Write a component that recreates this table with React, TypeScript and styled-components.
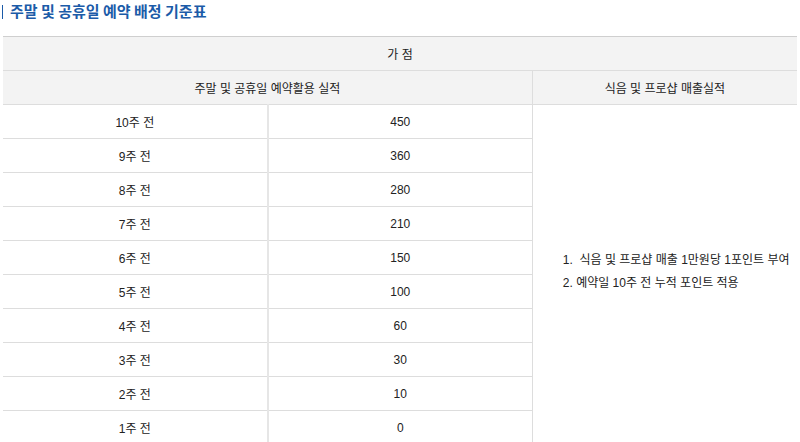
import React from 'react'
import styled, { createGlobalStyle } from 'styled-components'

const GlobalStyle = createGlobalStyle`
  body {
    margin: 0;
    background: #fff;
    font-family: 'Liberation Sans', 'Noto Sans CJK KR', sans-serif;
  }
`

const Wrap = styled.div`
  padding: 0 3px;
`

const Title = styled.h2`
  margin: 0;
  height: 36px;
  display: flex;
  align-items: flex-start;
  padding-top: 1px;
  box-sizing: border-box;
  font-family: 'Noto Sans CJK KR', sans-serif;
  font-size: 15px;
  font-weight: 700;
  color: #1b5ba8;
  line-height: 20px;
  &::before {
    content: '';
    width: 1px;
    height: 14px;
    margin: 4px 7px 0 -1px;
    background: #1b5ba8;
  }
`

const Table = styled.table`
  width: 100%;
  border-collapse: collapse;
  table-layout: fixed;
  border-top: 1px solid #cfcfcf;
  font-size: 12px;
  color: #222;
`

const Th = styled.th`
  height: 33px;
  padding: 0;
  background: #f3f3f3;
  font-weight: 400;
  border-bottom: 1px solid #ddd;
  & + & {
    border-left: 1px solid #ddd;
  }
`

const Td = styled.td`
  height: 33px;
  padding: 0;
  text-align: center;
  border-bottom: 1px solid #ddd;
  & + & {
    border-left: 2px solid #e6e6e6;
  }
`

const NoteCell = styled.td`
  padding: 0 0 6px 30px;
  vertical-align: middle;
  border-left: 1px solid #ddd;
`

const Notes = styled.ol`
  margin: 0;
  padding: 0;
  list-style: none;
  li {
    line-height: 23px;
  }
`

const rows: [string, string][] = [
  ['10주 전', '450'],
  ['9주 전', '360'],
  ['8주 전', '280'],
  ['7주 전', '210'],
  ['6주 전', '150'],
  ['5주 전', '100'],
  ['4주 전', '60'],
  ['3주 전', '30'],
  ['2주 전', '10'],
  ['1주 전', '0'],
]

export default function App() {
  return (
    <Wrap>
      <GlobalStyle />
      <Title>주말 및 공휴일 예약 배정 기준표</Title>
      <Table>
        <thead>
          <tr>
            <Th colSpan={3}>가 점</Th>
          </tr>
          <tr>
            <Th colSpan={2}>주말 및 공휴일 예약활용 실적</Th>
            <Th>식음 및 프로샵 매출실적</Th>
          </tr>
        </thead>
        <tbody>
          {rows.map(([week, point], i) => (
            <tr key={week}>
              <Td>{week}</Td>
              <Td>{point}</Td>
              {i === 0 && (
                <NoteCell rowSpan={rows.length}>
                  <Notes>
                    <li>1.&nbsp; 식음 및 프로샵 매출 1만원당 1포인트 부여</li>
                    <li>2. 예약일 10주 전 누적 포인트 적용</li>
                  </Notes>
                </NoteCell>
              )}
            </tr>
          ))}
        </tbody>
      </Table>
    </Wrap>
  )
}
